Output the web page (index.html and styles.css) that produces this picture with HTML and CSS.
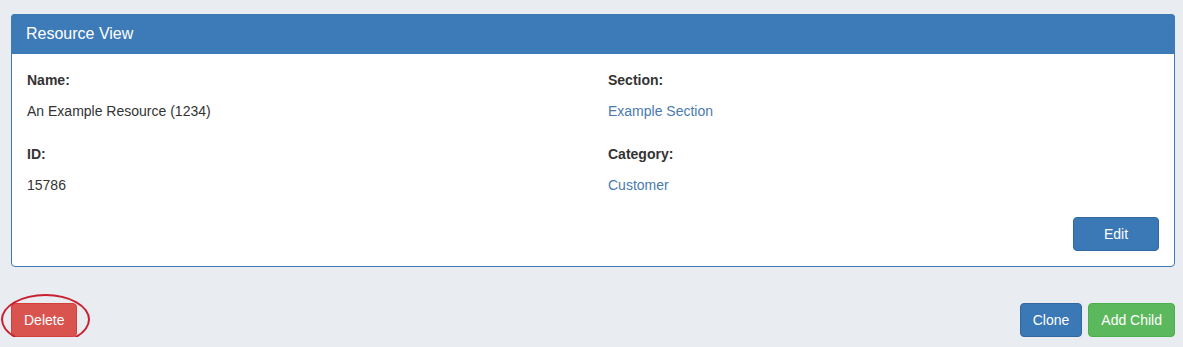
FILE: index.html
```html
<!DOCTYPE html>
<html lang="en">
  <head>
    <meta charset="UTF-8" />
    <title>Resource View</title>
    <link rel="stylesheet" href="styles.css">
  </head>
  <body>
    <div class="page">
      <div class="panel">
        <div class="panelHeading">Resource View</div>
        <div class="panelBody">
          <div class="fields">
            <div class="field">
              <div class="fieldLabel">Name:</div>
              <div class="fieldValue">An Example Resource (1234)</div>
            </div>
            <div class="field">
              <div class="fieldLabel">Section:</div>
              <div class="fieldValue"><a href="#">Example Section</a></div>
            </div>
            <div class="field">
              <div class="fieldLabel">ID:</div>
              <div class="fieldValue">15786</div>
            </div>
            <div class="field">
              <div class="fieldLabel">Category:</div>
              <div class="fieldValue"><a href="#">Customer</a></div>
            </div>
          </div>
          <div class="panelActions">
            <button class="btn btnPrimary" type="button">Edit</button>
          </div>
        </div>
      </div>

      <div class="bottomBar">
        <span class="circled">
          <button class="btn btnDanger" type="button">Delete</button>
        </span>
        <div class="rightButtons">
          <button class="btn btnPrimary" type="button">Clone</button>
          <button class="btn btnSuccess" type="button">Add Child</button>
        </div>
      </div>
    </div>
  </body>
</html>
```

FILE: styles.css
```css
*,
*:before,
*:after {
  margin: 0;
  padding: 0;
  box-sizing: border-box;
}

body {
  font-family: "Liberation Sans", Arial, sans-serif;
  font-size: 14px;
  line-height: 20px;
  color: #333;
  background-color: #e9ecf0;
}

.page {
  padding: 14px 8px 0 11px;
}

.panel {
  background-color: #fff;
  border: 1px solid #3b78b5;
  border-radius: 4px;
}

.panelHeading {
  padding: 11px 15px;
  height: 40px;
  margin: -1px -1px 0 -1px;
  font-size: 16px;
  line-height: 18px;
  color: #fff;
  background-color: #3d7ab8;
  border-radius: 4px 4px 0 0;
}

.panelBody {
  padding: 16px 0 15px 0;
}

.fields {
  display: grid;
  grid-template-columns: 1fr 1fr;
  row-gap: 23px;
}

.field {
  padding: 0 15px;
}

.fieldLabel {
  font-weight: 700;
  margin-bottom: 11px;
}

.fieldValue a {
  color: #4a7bae;
  text-decoration: none;
}

.panelActions {
  display: flex;
  justify-content: flex-end;
  padding: 0 15px;
  margin-top: 22px;
}

.btn {
  display: inline-block;
  padding: 6px 12px;
  font-family: "Liberation Sans", Arial, sans-serif;
  font-size: 14px;
  line-height: 20px;
  color: #fff;
  border: 1px solid transparent;
  border-radius: 4px;
  cursor: pointer;
}

.btnPrimary {
  background-color: #3b78b6;
  border-color: #32689f;
}

.panelActions .btnPrimary {
  width: 86px;
}

.btnDanger {
  background-color: #d9534f;
  border-color: #d43f3a;
}

.btnSuccess {
  background-color: #5cb85c;
  border-color: #4cae4c;
}

.bottomBar {
  display: flex;
  justify-content: space-between;
  align-items: center;
  margin-top: 36px;
}

.rightButtons {
  display: flex;
  gap: 6px;
}

.circled {
  position: relative;
  display: flex;
}

.circled:after {
  content: "";
  position: absolute;
  left: -10px;
  top: -9px;
  width: 89px;
  height: 51px;
  border: 2px solid #c8202f;
  border-radius: 50%;
}
```
